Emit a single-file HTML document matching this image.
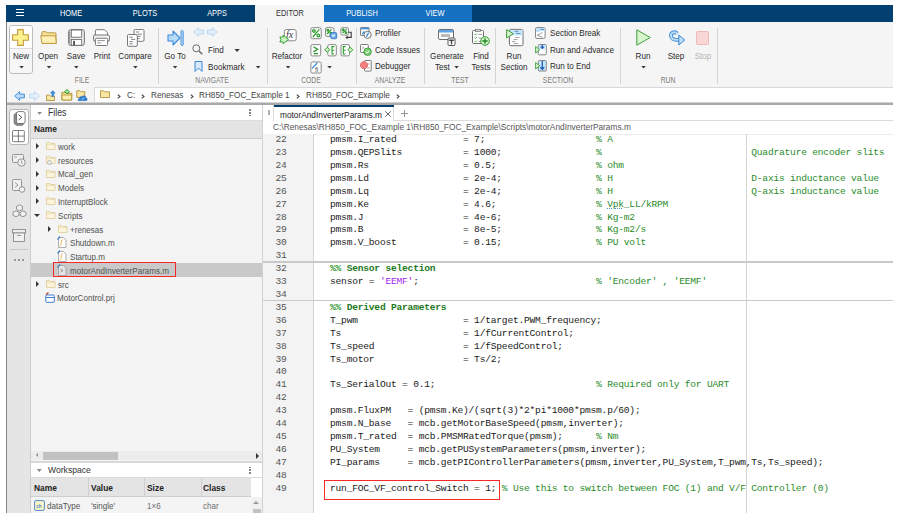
<!DOCTYPE html>
<html><head><meta charset="utf-8">
<style>
*{margin:0;padding:0;box-sizing:border-box}
html,body{width:899px;height:513px;overflow:hidden;background:#fff;position:relative;font-family:"Liberation Sans",sans-serif}
.a{position:absolute}
.t{position:absolute;white-space:pre;line-height:1;font-family:"Liberation Sans",sans-serif}
.t{transform:scaleX(.875);transform-origin:0 0}
.t.c{transform:translateX(-50%) scaleX(.875);transform-origin:50% 0}
.m{font-family:"Liberation Mono",monospace}
svg{position:absolute;overflow:visible}
/* tab bar */
#tabbar{left:6px;top:5px;width:887px;height:16.5px;background:#03406f}
.tab{color:#fff;font-size:8.46px;top:9.3px}
/* toolbar */
#toolbar{left:6px;top:21.5px;width:887px;height:66px;background:#f5f5f5}
.lbl{font-size:9.26px;color:#2a2a2a}
.grp{font-size:8.3px;color:#7a7a7a;top:75.7px}
.t.grp{transform:translateX(-50%) scaleX(.82)}
.sep{width:1px;background:#d4d4d4;top:27.5px;height:56.5px}
.arr{width:5.4px;height:3px;background:#383838;clip-path:polygon(0 0,100% 0,50% 100%)}
/* address */
#addr{left:6px;top:87.5px;width:887px;height:16px;background:#f5f5f5}
.code{font-family:"Liberation Mono",monospace;font-size:9.6px;letter-spacing:-0.214px;color:#1a1a1a;white-space:pre;position:absolute;line-height:12.91px}
.cm{color:#2a8c2a}
.cm2{color:#2a952a;font-weight:bold}
.cmb{color:#1d7a1d;font-weight:bold}
.str{color:#a51ff0}
.ln{position:absolute;font-family:"Liberation Mono",monospace;font-size:9.6px;letter-spacing:-0.214px;color:#555;line-height:12.91px;text-align:right;width:22px;white-space:pre}
.tree{font-size:9.49px;color:#505050}
.t.tree{transform:scaleX(.85)}
</style></head><body>
<!-- frame left border -->
<div class="a" style="left:6px;top:21.5px;width:1px;height:492px;background:#828282;z-index:5"></div>

<!-- TAB BAR -->
<div id="tabbar" class="a"></div>
<div class="a" style="left:255.3px;top:5px;width:68.6px;height:16.5px;background:#f5f5f5"></div>
<div class="a" style="left:324px;top:5px;width:148px;height:16.5px;background:#1470c0"></div>
<div class="a" style="left:16px;top:9px;width:8px;height:1.2px;background:#fff"></div>
<div class="a" style="left:16px;top:12px;width:8px;height:1.2px;background:#fff"></div>
<div class="a" style="left:16px;top:15px;width:8px;height:1.2px;background:#fff"></div>
<div class="t tab c" style="left:71px">HOME</div>
<div class="t tab c" style="left:145px">PLOTS</div>
<div class="t tab c" style="left:217px">APPS</div>
<div class="t tab c" style="left:290px;color:#333">EDITOR</div>
<div class="t tab c" style="left:362px">PUBLISH</div>
<div class="t tab c" style="left:435px">VIEW</div>

<!-- TOOLBAR -->
<div id="toolbar" class="a"></div>

<!-- FILE group -->
<div class="a" style="left:8.8px;top:24.5px;width:24.5px;height:49px;border:1px solid #bdbdbd;border-radius:3px;background:#f7f7f7"></div>
<div class="a" style="left:9.8px;top:25.5px;width:22.5px;height:23px;background:#fff;border-bottom:1px solid #dcdcdc;border-radius:2px 2px 0 0"></div>
<svg style="left:12.3px;top:28.9px" width="17" height="17" viewBox="0 0 17 17"><path d="M5.7 0.6h5.6v5.1h5.1v5.6h-5.1v5.1H5.7v-5.1H0.6V5.7h5.1z" fill="#fdf08e" stroke="#c49a3c" stroke-width="1.1" stroke-linejoin="round"/></svg>
<svg style="left:40px;top:31px" width="17" height="13" viewBox="0 0 17 13"><path d="M1.8 1.6q0-0.9 0.9-0.9h3.4l1 1.1h8q0.9 0 0.9 0.9v9.6H2.2z" fill="#f5e296" stroke="#b8913a" stroke-width="0.9" stroke-linejoin="round"/><path d="M0.7 4.8h14.8l0.9 7.6H2z" fill="#fdf0b4" stroke="#b8913a" stroke-width="0.9" stroke-linejoin="round"/></svg>
<svg style="left:67.5px;top:28.9px" width="17" height="17" viewBox="0 0 17 17"><rect x="0.7" y="0.7" width="15.6" height="15.6" rx="2" fill="#f4f4f4" stroke="#6a6a6a" stroke-width="1"/><path d="M1.6 2.5v12" stroke="#9a9a9a" stroke-width="1.4"/><rect x="3.3" y="1" width="10.4" height="7.2" fill="#fff" stroke="#6a6a6a" stroke-width="0.9"/><rect x="3.3" y="10.4" width="10.4" height="5.9" fill="#fff" stroke="#6a6a6a" stroke-width="0.9"/><rect x="5.2" y="11.8" width="1.7" height="4.3" fill="#444"/></svg>
<svg style="left:93px;top:28.9px" width="17" height="17" viewBox="0 0 17 17"><path d="M2.4 6V1.5q0-0.8 0.8-0.8h8.3l2.9 2.9V6" fill="#fff" stroke="#6a6a6a" stroke-width="0.9"/><rect x="0.5" y="6" width="16" height="6.3" rx="1.6" fill="#f0f0f0" stroke="#6a6a6a" stroke-width="0.9"/><rect x="2.4" y="9.3" width="12.2" height="7.2" rx="1" fill="#fff" stroke="#6a6a6a" stroke-width="0.9"/><path d="M4.3 11.6h7.5M4.3 13.9h3.5" stroke="#777" stroke-width="0.8"/></svg>
<svg style="left:126.5px;top:28.5px" width="18" height="18" viewBox="0 0 18 18"><rect x="7" y="0.5" width="10" height="11.8" rx="1.2" fill="#fff" stroke="#6a6a6a" stroke-width="0.9"/><path d="M8.8 3h3.5M10.5 5.2h4.5M8.8 7.4h5M8.8 9.6h4" stroke="#666" stroke-width="0.8"/><rect x="0.5" y="5.5" width="9.8" height="11.8" rx="1.2" fill="#fff" stroke="#6a6a6a" stroke-width="0.9"/><path d="M2.3 8.2h3.5M4 10.4h4.3M2.3 12.6h3.5M2.3 14.8h3.5" stroke="#666" stroke-width="0.8"/></svg>
<div class="t lbl c" style="left:21px;top:51.5px">New</div>
<div class="t lbl c" style="left:48.4px;top:51.5px">Open</div>
<div class="t lbl c" style="left:75.7px;top:51.5px">Save</div>
<div class="t lbl c" style="left:101.6px;top:51.5px">Print</div>
<div class="t lbl c" style="left:134.8px;top:51.5px">Compare</div>
<div class="a arr" style="left:18.9px;top:65.5px"></div>
<div class="a arr" style="left:46.3px;top:65.5px"></div>
<div class="a arr" style="left:73.6px;top:65.5px"></div>
<div class="a arr" style="left:132.7px;top:65.5px"></div>
<div class="t grp c" style="left:82px">FILE</div>
<div class="a sep" style="left:158px"></div>

<!-- NAVIGATE -->
<svg style="left:166.5px;top:30px" width="17" height="16" viewBox="0 0 17 16"><path d="M1 5h5V1l7 7-7 7v-4H1z" fill="#b8dcf8" stroke="#3b8ad8" stroke-width="1.1" stroke-linejoin="round"/><rect x="14" y="0.5" width="2.2" height="15" rx="1" fill="#b8dcf8" stroke="#3b8ad8" stroke-width="0.9"/></svg>
<div class="t lbl c" style="left:174.5px;top:51.5px">Go To</div>
<div class="a arr" style="left:172.4px;top:65.5px"></div>
<svg style="left:192.9px;top:27.4px" width="25" height="10" viewBox="0 0 25 10"><path d="M0.6 5L5.2 0.6V3h5.2v4H5.2v2.4z" fill="#e2effb" stroke="#b3d4f0" stroke-width="0.9" stroke-linejoin="round"/><path d="M24 5L19.4 0.6V3h-5.2v4h5.2v2.4z" fill="#e2effb" stroke="#b3d4f0" stroke-width="0.9" stroke-linejoin="round"/></svg>
<svg style="left:192px;top:44px" width="11" height="11" viewBox="0 0 11 11"><circle cx="4.3" cy="4.3" r="3.5" fill="none" stroke="#6a6a6a" stroke-width="1"/><path d="M7 7l3.3 3.3" stroke="#6a6a6a" stroke-width="1.4"/></svg>
<div class="t lbl" style="left:208.2px;top:46.0px">Find</div>
<div class="a arr" style="left:234.4px;top:49px"></div>
<svg style="left:193.5px;top:61px" width="9" height="11" viewBox="0 0 9 11"><path d="M1 0.5h7v10L4.5 7 1 10.5z" fill="#d7e9fa" stroke="#3b8ad8" stroke-width="1"/></svg>
<div class="t lbl" style="left:208.2px;top:62.5px">Bookmark</div>
<div class="a arr" style="left:255.4px;top:65.5px"></div>
<div class="t grp c" style="left:212.3px">NAVIGATE</div>
<div class="a sep" style="left:266.5px"></div>

<!-- CODE -->
<svg style="left:278.5px;top:28.8px" width="18" height="16" viewBox="0 0 18 16"><rect x="5.4" y="0.5" width="11.8" height="11.3" rx="2" fill="#fff" stroke="#7a7a7a" stroke-width="0.9"/><text x="7" y="9.3" font-family="Liberation Serif" font-style="italic" font-size="10" fill="#3a3a3a">fx</text><path d="M0.8 8H4.2V6.3L9.5 10.5 4.2 14.7V13H0.8L2 10.5z" fill="#c8f5c0" stroke="#2f9a2f" stroke-width="0.9" stroke-linejoin="round"/></svg>
<div class="t lbl c" style="left:287px;top:51.5px">Refactor</div>
<div class="a arr" style="left:285.4px;top:65.5px"></div>
<svg style="left:309.5px;top:26.5px" width="44" height="47" viewBox="0 0 44 47">
<g fill="#fff" stroke="#7a7a7a" stroke-width="0.9">
<rect x="0.9" y="0.7" width="10.3" height="11" rx="1.5"/>
<rect x="15.5" y="0.7" width="8.5" height="8.7" rx="1.5"/>
<rect x="30.9" y="0.7" width="7.6" height="7.3" rx="1.5"/>
<rect x="0.9" y="17.6" width="9.8" height="11.3" rx="1.5"/>
<rect x="17.8" y="17.6" width="8.5" height="11.3" rx="1.5"/>
<rect x="31" y="17.6" width="8.5" height="11.3" rx="1.5"/>
<rect x="0.9" y="35" width="10.3" height="11" rx="1.5"/>
</g>
<g fill="none" stroke="#2a9a2a" stroke-width="1.2">
<circle cx="3.9" cy="3.9" r="1.3"/><circle cx="8.3" cy="8.5" r="1.3"/><path d="M2.8 10L9.3 2.4"/>
<circle cx="17.8" cy="3.2" r="0.9"/><circle cx="20.8" cy="6.2" r="0.9"/><path d="M17 7l4.6-4.6"/>
<circle cx="33.2" cy="3" r="0.8"/><circle cx="36" cy="5.7" r="0.8"/><path d="M32.6 6.2l4-4"/>
<path d="M3.5 19.7L7.6 22.3 3.5 24.9M3.8 26.6h4.2" stroke-width="1.3"/>
<path d="M24.3 19.6H22V27h2.3M22 23.3h2.3" stroke-width="1.1"/>
<path d="M35.6 19.6H33.3V27h2.3M33.3 23.3h2.3" stroke-width="1.1"/>
</g>
<path d="M19.6 8.6L21.6 5.6H25.6Q26.6 5.6 26.6 6.6V10.7Q26.6 11.7 25.6 11.7H21.6z" fill="#6aa8e6" stroke="#2f6fc0" stroke-width="0.8"/><rect x="22" y="7.6" width="3" height="2" fill="#d8ebfb"/>
<path d="M38.8 5.2h2.4v5.2h-4.2" fill="none" stroke="#3a3a3a" stroke-width="1.1"/><path d="M37.6 8.6l-2.2 1.8 2.2 1.8z" fill="#3a3a3a"/>
<path d="M17.3 20.2l2.5 2.6-2.5 2.6-2.5-2.6z" fill="#c8f0c0" stroke="#2a9a2a" stroke-width="0.9"/>
<path d="M40.3 20.2l2.5 2.6-2.5 2.6-2.5-2.6z" fill="#c8f0c0" stroke="#2a9a2a" stroke-width="0.9"/>
<path d="M2 41.5L7.2 36" stroke="#3b8ad8" stroke-width="1.1"/><text x="5" y="44.8" font-size="6.5" fill="#555" font-family="Liberation Sans">fi</text>
</svg>
<div class="a arr" style="left:326.9px;top:65.5px"></div>
<div class="t grp c" style="left:311px">CODE</div>
<div class="a sep" style="left:355.5px"></div>

<!-- ANALYZE -->
<svg style="left:360px;top:27.2px" width="12" height="12" viewBox="0 0 12 12"><rect x="0.5" y="0.5" width="8.6" height="8" rx="0.8" fill="#fff" stroke="#6e6e6e" stroke-width="0.9"/><rect x="0.6" y="0.6" width="8.4" height="1.8" fill="#4a90d9"/><circle cx="7.6" cy="7.8" r="3.6" fill="#f4f4f4" stroke="#6e6e6e" stroke-width="0.9"/><path d="M2 7.5l1.8-3.2 0.9 1z" fill="#3b8ad8" stroke="#1f6fc0" stroke-width="0.5"/><path d="M6.4 9.6L8.6 5.6" stroke="#3b8ad8" stroke-width="1.2"/></svg>
<div class="t lbl" style="left:375.2px;top:29.0px">Profiler</div>
<svg style="left:360px;top:43.8px" width="12" height="12" viewBox="0 0 12 12"><rect x="0.5" y="0.5" width="7.8" height="8" rx="0.8" fill="#fff" stroke="#6e6e6e" stroke-width="0.9"/><path d="M2.2 2.5l1.6 1.3-1.6 1.3" fill="none" stroke="#777" stroke-width="0.7"/><circle cx="7.6" cy="7.7" r="3.7" fill="#7fd27a" stroke="#2f9a2f" stroke-width="0.9"/><path d="M5.7 7.8l1.3 1.3 2.3-2.5" fill="none" stroke="#fff" stroke-width="1"/></svg>
<div class="t lbl" style="left:375.2px;top:45.5px">Code Issues</div>
<svg style="left:360px;top:60.2px" width="12" height="12" viewBox="0 0 12 12"><rect x="4.6" y="0.5" width="6.6" height="10.6" rx="0.6" fill="#fff" stroke="#6e6e6e" stroke-width="0.9"/><path d="M7.2 4h2.3M7.2 8h2.3" stroke="#c94b4b" stroke-width="0.7"/><path d="M2.6 1.8h2.8l2 2v2.8l-2 2H2.6l-2-2V3.8z" fill="#f58080" stroke="#cf5a5a" stroke-width="0.8"/></svg>
<div class="t lbl" style="left:375.2px;top:62.0px">Debugger</div>
<div class="t grp c" style="left:389.6px">ANALYZE</div>
<div class="a sep" style="left:423.5px"></div>

<!-- TEST -->
<svg style="left:438px;top:28.5px" width="18" height="17" viewBox="0 0 18 17"><rect x="0.5" y="0.5" width="15" height="10" rx="1.5" fill="#fff" stroke="#6e6e6e" stroke-width="1"/><rect x="1" y="1" width="14" height="2.5" fill="#5fa3e6"/><rect x="3" y="5" width="9" height="3" fill="#bbb"/><rect x="10" y="9" width="7" height="7.5" rx="1" fill="#fff" stroke="#555" stroke-width="1"/><path d="M11.2 11.2h4.6M13.5 11.2v4.3" stroke="#444" stroke-width="1.4"/></svg>
<div class="t lbl c" style="left:446.6px;top:51.5px">Generate</div>
<div class="t lbl" style="left:434.5px;top:63.0px">Test</div>
<div class="a arr" style="left:453.9px;top:65.5px"></div>
<svg style="left:471.5px;top:28.5px" width="18" height="17" viewBox="0 0 18 17"><rect x="0.5" y="1.5" width="11" height="13" rx="1" fill="#fff" stroke="#6e6e6e" stroke-width="1"/><rect x="3.5" y="0.5" width="5" height="2" fill="#ddd" stroke="#6e6e6e" stroke-width="0.7"/><path d="M2.5 5l1 1 1.5-1.5M2.5 8.5l1 1 1.5-1.5M2.5 12l1 1 1.5-1.5" fill="none" stroke="#2f9a2f" stroke-width="0.8"/><path d="M6.5 5.5h3.5M6.5 9h3M6.5 12.5h2" stroke="#888" stroke-width="0.8"/><circle cx="13" cy="12" r="4.3" fill="#d8f5d0" stroke="#2f9a2f" stroke-width="1"/><path d="M13 9.3v5.4M10.3 12h5.4" stroke="#1f8a1f" stroke-width="1.4"/></svg>
<div class="t lbl c" style="left:480.7px;top:51.5px">Find</div>
<div class="t lbl c" style="left:480.7px;top:63.0px">Tests</div>
<div class="t grp c" style="left:459.6px">TEST</div>
<div class="a sep" style="left:495.3px"></div>

<!-- SECTION -->
<svg style="left:506px;top:29px" width="18" height="17" viewBox="0 0 18 17"><rect x="3.4" y="0.4" width="13.6" height="16.3" rx="1.5" fill="#fff" stroke="#6e6e6e" stroke-width="1"/><rect x="3.9" y="0.9" width="12.6" height="5.6" fill="#c8e6fb"/><path d="M8.5 2.3h4M10 4.5h4.5" stroke="#4a7fb0" stroke-width="0.8"/><path d="M9 8.5h4.5M7.5 10.5h4M6 12.5h3.5M7.5 14.5h5" stroke="#808080" stroke-width="0.7"/><path d="M0.6 0.6v8.4l6.8-4.2z" fill="#d6f5cc" stroke="#3f9f3f" stroke-width="1" stroke-linejoin="round"/></svg>
<div class="t lbl c" style="left:514.4px;top:51.5px">Run</div>
<div class="t lbl c" style="left:514.4px;top:63.0px">Section</div>
<svg style="left:535px;top:27.2px" width="11" height="12" viewBox="0 0 11 12"><rect x="0.5" y="0.5" width="9.6" height="11" rx="1.6" fill="#fff" stroke="#7a7a7a" stroke-width="0.9"/><path d="M1 1h8.6v3H5.2L4.2 5H1z" fill="#bfe0fb"/><path d="M5.5 2.5h3.5" stroke="#3b7fc0" stroke-width="0.8"/><path d="M2 8.3l5.5-2.6M2 8.3l5.5 1.8" stroke="#888" stroke-width="0.8"/></svg>
<div class="t lbl" style="left:550.3px;top:29.0px">Section Break</div>
<svg style="left:534.5px;top:43.6px" width="12" height="12" viewBox="0 0 12 12"><rect x="3.3" y="0.5" width="8" height="10.3" rx="1" fill="#fff" stroke="#7a7a7a" stroke-width="0.9"/><rect x="3.8" y="1" width="7" height="4.2" fill="#c8e6fb"/><path d="M7.3 0.8v3.2M5.6 2.6l1.7 1.8 1.7-1.8" stroke="#1f5fb0" stroke-width="1.2" fill="none"/><path d="M0.6 2.5v6.5l4.2-3.25z" fill="#d6f5cc" stroke="#3f9f3f" stroke-width="0.9" stroke-linejoin="round"/></svg>
<div class="t lbl" style="left:550.3px;top:45.5px">Run and Advance</div>
<svg style="left:534.5px;top:59.9px" width="12" height="12" viewBox="0 0 12 12"><rect x="3.3" y="0.5" width="8" height="10.5" rx="1" fill="#c8e6fb" stroke="#7a7a7a" stroke-width="0.9"/><path d="M7.3 1v8M5.4 7.2l1.9 2.1 1.9-2.1" stroke="#1f5fb0" stroke-width="1.3" fill="none"/><path d="M0.6 2.5v6.5l4.2-3.25z" fill="#d6f5cc" stroke="#3f9f3f" stroke-width="0.9" stroke-linejoin="round"/></svg>
<div class="t lbl" style="left:550.3px;top:62.0px">Run to End</div>
<div class="t grp c" style="left:557.5px">SECTION</div>
<div class="a sep" style="left:619.6px"></div>

<!-- RUN -->
<svg style="left:635.8px;top:28.9px" width="15" height="17" viewBox="0 0 15 17"><path d="M0.8 0.8v15.4l13.4-7.7z" fill="#d6f5cc" stroke="#3f9f3f" stroke-width="1" stroke-linejoin="round"/></svg>
<div class="t lbl c" style="left:643px;top:51.5px">Run</div>
<div class="a arr" style="left:640.9px;top:65.5px"></div>
<svg style="left:667.5px;top:29.8px" width="18" height="16" viewBox="0 0 18 16"><path d="M9.2 3.6C7.2 1.3 3 2 3 5.5 3 8.3 5.5 9.8 8.5 9.8H11.5" fill="none" stroke="#3d8ad6" stroke-width="3.8"/><path d="M9.2 3.6C7.2 1.3 3 2 3 5.5 3 8.3 5.5 9.8 8.5 9.8H11.5" fill="none" stroke="#bcdcf7" stroke-width="1.9"/><path d="M10.8 5L16.8 10 10.8 15z" fill="#bcdcf7" stroke="#3d8ad6" stroke-width="1" stroke-linejoin="round"/></svg>
<div class="t lbl c" style="left:676.4px;top:51.5px">Step</div>
<div class="a" style="left:696.2px;top:31px;width:13.2px;height:13.6px;background:#f9d7d7;border:0.8px solid #efb9b9;border-radius:1.5px"></div>
<div class="t lbl c" style="left:703px;top:51.5px;color:#b4b4b4">Stop</div>
<div class="t grp c" style="left:668.2px">RUN</div>
<div class="a sep" style="left:716.6px"></div>


<!-- ADDRESS BAR -->
<div id="addr" class="a"></div>
<svg style="left:13.5px;top:90.8px" width="11" height="10" viewBox="0 0 11 10"><path d="M0.6 5L5.6 0.6V3.1H10.4V6.9H5.6V9.4z" fill="#b5d9f7" stroke="#3d8ad6" stroke-width="0.9" stroke-linejoin="round"/></svg>
<svg style="left:28.8px;top:90.8px" width="11" height="10" viewBox="0 0 11 10"><path d="M10.4 5L5.4 0.6V3.1H0.6V6.9H5.4V9.4z" fill="#e4f0fb" stroke="#b8d6f0" stroke-width="0.9" stroke-linejoin="round"/></svg>
<svg style="left:46px;top:90px" width="10" height="11" viewBox="0 0 10 11"><path d="M0.5 5.2h3l1 1h4v4.3H0.5z" fill="#f6e7a6" stroke="#b39234" stroke-width="0.9" stroke-linejoin="round"/><path d="M6.8 0.5L4.3 3.2h1.6v3.3h1.8V3.2h1.6z" fill="#3b8ad8" stroke="#1f6fc0" stroke-width="0.4"/></svg>
<svg style="left:61px;top:89.3px" width="12" height="12" viewBox="0 0 12 12"><path d="M0.8 3.3h3.2l1 1h5.8v6.7H0.8z" fill="#f1dc8f" stroke="#b39234" stroke-width="0.9" stroke-linejoin="round"/><path d="M0.8 6h10l-0.5 5H1.3z" fill="#fbeeb0" stroke="#b39234" stroke-width="0.8" stroke-linejoin="round"/><path d="M6 0.5l2.4 2.2L6 4.9 3.6 2.7z" fill="#9fe39a" stroke="#2f9a2f" stroke-width="0.9"/></svg>
<svg style="left:75.5px;top:89.5px" width="12" height="12" viewBox="0 0 12 12"><path d="M0.8 0.8h3.3l1 1h3.7v5.6H0.8z" fill="#f6e7a6" stroke="#b39234" stroke-width="0.9" stroke-linejoin="round"/><path d="M2.3 10.6h7.8c1.3 0 1.6-2.5-0.2-2.7 0-2-2.7-2.9-3.9-1.1-1.4-0.5-2.6 0.3-2.5 1.5C2.3 8.6 1.5 10.6 2.3 10.6z" fill="#2f7fd4" stroke="#1f66b8" stroke-width="0.6"/><path d="M6.3 9.6l1.4-1.8" stroke="#fff" stroke-width="0.9"/></svg>
<div class="a" style="left:94.4px;top:87px;width:798.6px;height:15.5px;background:#fff;border:1px solid #d8d8d8;border-right:none"></div>
<svg style="left:100px;top:89.6px" width="10" height="8" viewBox="0 0 10 8"><path d="M0.5 0.8h3.2l1 1h4.8v5.7H0.5z" fill="#f6e7a6" stroke="#b39234" stroke-width="0.9"/></svg>
<svg style="left:116.9px;top:94px" width="4" height="5" viewBox="0 0 4 5"><path d="M0.8 0.6L3 2.5 0.8 4.4" fill="none" stroke="#444" stroke-width="1.1"/></svg>
<div class="t" style="left:126.7px;top:91px;font-size:9.37px;color:#444">C:</div>
<svg style="left:141.1px;top:94px" width="4" height="5" viewBox="0 0 4 5"><path d="M0.8 0.6L3 2.5 0.8 4.4" fill="none" stroke="#444" stroke-width="1.1"/></svg>
<div class="t" style="left:150.7px;top:91px;font-size:9.37px;color:#444">Renesas</div>
<svg style="left:189.9px;top:94px" width="4" height="5" viewBox="0 0 4 5"><path d="M0.8 0.6L3 2.5 0.8 4.4" fill="none" stroke="#444" stroke-width="1.1"/></svg>
<div class="t" style="left:199.2px;top:91px;font-size:9.37px;color:#444">RH850_FOC_Example 1</div>
<svg style="left:296.1px;top:94px" width="4" height="5" viewBox="0 0 4 5"><path d="M0.8 0.6L3 2.5 0.8 4.4" fill="none" stroke="#444" stroke-width="1.1"/></svg>
<div class="t" style="left:306px;top:91px;font-size:9.37px;color:#444">RH850_FOC_Example</div>
<svg style="left:396.4px;top:94px" width="4" height="5" viewBox="0 0 4 5"><path d="M0.8 0.6L3 2.5 0.8 4.4" fill="none" stroke="#444" stroke-width="1.1"/></svg>
<div class="a" style="left:6px;top:102px;width:887px;height:1.4px;background:#d2d2d2"></div><div class="a" style="left:6px;top:103.4px;width:887px;height:1.4px;background:#a9a9a9"></div>

<!-- LEFT SIDEBAR -->
<div class="a" style="left:6px;top:104.5px;width:24.5px;height:409px;background:#e5e5e5;border-right:1px solid #cdcdcd"></div>
<div class="a" style="left:8.7px;top:109.1px;width:20.4px;height:36.3px;background:#fff;border:1px solid #b5b5b5;border-radius:3px"></div>
<svg style="left:12.5px;top:111.3px" width="13" height="15" viewBox="0 0 13 15"><path d="M3.5 1.2L1 3.7V12.5L3.5 14.4H9.5L11 12.5H3.5z" fill="#8c8c8c" stroke="#6a6a6a" stroke-width="0.6" stroke-linejoin="round"/><rect x="3.5" y="0.6" width="8.6" height="11.9" rx="2" fill="#fff" stroke="#6a6a6a" stroke-width="0.9"/><path d="M5.6 3.8l3.2 2.6-3.2 2.6" fill="none" stroke="#555" stroke-width="1"/></svg>
<svg style="left:12.3px;top:129.6px" width="13" height="12" viewBox="0 0 13 12"><rect x="0.5" y="0.5" width="11.8" height="11.2" rx="0.8" fill="#fff" stroke="#6e6e6e" stroke-width="0.9"/><path d="M6.4 0.5v11.2M0.5 6.1h11.8" stroke="#6e6e6e" stroke-width="0.9"/></svg>
<svg style="left:12px;top:153.5px" width="14" height="13" viewBox="0 0 14 13"><rect x="0.5" y="0.5" width="11" height="8" rx="1" fill="#f0f0f0" stroke="#8a8a8a" stroke-width="0.9"/><path d="M2 3h3" stroke="#8a8a8a" stroke-width="0.8"/><circle cx="9.5" cy="8.5" r="3.7" fill="#f0f0f0" stroke="#8a8a8a" stroke-width="0.9"/><path d="M9.5 6.5v2.2l1.5 1" fill="none" stroke="#8a8a8a" stroke-width="0.8"/></svg>
<svg style="left:12px;top:178.5px" width="14" height="14" viewBox="0 0 14 14"><rect x="0.5" y="0.5" width="9" height="11" rx="1" fill="#f0f0f0" stroke="#8a8a8a" stroke-width="0.9"/><path d="M3 3.5l3 2.5-3 2.5" fill="none" stroke="#8a8a8a" stroke-width="0.9"/><circle cx="10" cy="10.5" r="2.8" fill="#f0f0f0" stroke="#8a8a8a" stroke-width="0.9"/></svg>
<svg style="left:11.5px;top:204px" width="15" height="14" viewBox="0 0 15 14"><g fill="#f0f0f0" stroke="#8a8a8a" stroke-width="0.9"><path d="M7.5 0.8l3 1.5v3l-3 1.5-3-1.5v-3z"/><path d="M4 6.8l3 1.5v3l-3 1.5-3-1.5v-3z"/><path d="M11 6.8l3 1.5v3l-3 1.5-3-1.5v-3z"/></g></svg>
<svg style="left:12px;top:228.5px" width="14" height="13" viewBox="0 0 14 13"><rect x="0.5" y="0.5" width="13" height="3.5" fill="#f0f0f0" stroke="#8a8a8a" stroke-width="0.9"/><rect x="1.5" y="4" width="11" height="8.5" fill="#f0f0f0" stroke="#8a8a8a" stroke-width="0.9"/><path d="M5 6.5h4" stroke="#8a8a8a" stroke-width="0.9"/></svg>
<div class="a" style="left:10px;top:249px;width:17.6px;height:1px;background:#c8c8c8"></div>
<div class="a" style="left:13.5px;top:259px;width:2px;height:2px;background:#7a7a7a;border-radius:50%"></div><div class="a" style="left:17.7px;top:259px;width:2px;height:2px;background:#7a7a7a;border-radius:50%"></div><div class="a" style="left:21.9px;top:259px;width:2px;height:2px;background:#7a7a7a;border-radius:50%"></div>

<!-- FILES PANEL -->
<div class="a" style="left:31px;top:104.5px;width:231px;height:409px;background:#f4f4f4"></div>
<div class="a" style="left:262px;top:104.5px;width:1.3px;height:409px;background:#d2d2d2"></div>
<div class="a" style="left:31px;top:104.5px;width:231px;height:16px;background:#fff;border-bottom:1px solid #dcdcdc"></div>
<div class="a arr" style="left:37px;top:111.7px;background:#8a8a8a;width:5.2px;height:3px"></div>
<div class="t" style="left:47.5px;top:108.4px;font-size:10px;color:#333">Files</div>
<div class="a" style="left:249.1px;top:109.2px;width:1.5px;height:1.5px;background:#6a6a6a;border-radius:50%"></div><div class="a" style="left:249.1px;top:112.0px;width:1.5px;height:1.5px;background:#6a6a6a;border-radius:50%"></div><div class="a" style="left:249.1px;top:114.8px;width:1.5px;height:1.5px;background:#6a6a6a;border-radius:50%"></div>
<div class="a" style="left:31px;top:120.5px;width:231px;height:18px;background:#e4e4e4;border-bottom:1.5px solid #cdcdcd"></div>
<div class="t" style="left:33.5px;top:124px;font-size:9.60px;color:#222;font-weight:bold">Name</div>
<div class="a" style="left:31px;top:263px;width:231px;height:13.5px;background:#c9c9c9"></div>
<div class="a" style="left:35.800000000000004px;top:143.4px;width:0;height:0;border-top:3px solid transparent;border-bottom:3px solid transparent;border-left:3px solid #333"></div>
<svg style="left:45.5px;top:142.0px" width="10" height="8" viewBox="0 0 10 8"><path d="M0.5 0.5h3.2l1 1h4.3v6H0.5z" fill="#fcf5dc" stroke="#dccb96" stroke-width="0.8"/><path d="M0.5 2.3h8.5" stroke="#dccb96" stroke-width="0.6"/></svg>
<div class="t tree" style="left:57.5px;top:141.8px">work</div>
<div class="a" style="left:35.800000000000004px;top:157.2px;width:0;height:0;border-top:3px solid transparent;border-bottom:3px solid transparent;border-left:3px solid #333"></div>
<svg style="left:45.5px;top:155.8px" width="10" height="8" viewBox="0 0 10 8"><path d="M0.5 0.5h3.2l1 1h4.3v6H0.5z" fill="#fcf5dc" stroke="#dccb96" stroke-width="0.8"/><path d="M0.5 2.3h8.5" stroke="#dccb96" stroke-width="0.6"/><circle cx="3.5" cy="6.5" r="2" fill="#eee" stroke="#999" stroke-width="0.6"/></svg>
<div class="t tree" style="left:57.5px;top:155.6px">resources</div>
<div class="a" style="left:35.800000000000004px;top:171.0px;width:0;height:0;border-top:3px solid transparent;border-bottom:3px solid transparent;border-left:3px solid #333"></div>
<svg style="left:45.5px;top:169.6px" width="10" height="8" viewBox="0 0 10 8"><path d="M0.5 0.5h3.2l1 1h4.3v6H0.5z" fill="#fcf5dc" stroke="#dccb96" stroke-width="0.8"/><path d="M0.5 2.3h8.5" stroke="#dccb96" stroke-width="0.6"/></svg>
<div class="t tree" style="left:57.5px;top:169.4px">Mcal_gen</div>
<div class="a" style="left:35.800000000000004px;top:184.7px;width:0;height:0;border-top:3px solid transparent;border-bottom:3px solid transparent;border-left:3px solid #333"></div>
<svg style="left:45.5px;top:183.3px" width="10" height="8" viewBox="0 0 10 8"><path d="M0.5 0.5h3.2l1 1h4.3v6H0.5z" fill="#fcf5dc" stroke="#dccb96" stroke-width="0.8"/><path d="M0.5 2.3h8.5" stroke="#dccb96" stroke-width="0.6"/></svg>
<div class="t tree" style="left:57.5px;top:183.1px">Models</div>
<div class="a" style="left:35.800000000000004px;top:198.4px;width:0;height:0;border-top:3px solid transparent;border-bottom:3px solid transparent;border-left:3px solid #333"></div>
<svg style="left:45.5px;top:197.0px" width="10" height="8" viewBox="0 0 10 8"><path d="M0.5 0.5h3.2l1 1h4.3v6H0.5z" fill="#fcf5dc" stroke="#dccb96" stroke-width="0.8"/><path d="M0.5 2.3h8.5" stroke="#dccb96" stroke-width="0.6"/></svg>
<div class="t tree" style="left:57.5px;top:196.8px">InterruptBlock</div>
<div class="a" style="left:34.1px;top:213.89999999999998px;width:0;height:0;border-left:3px solid transparent;border-right:3px solid transparent;border-top:3px solid #333"></div>
<svg style="left:45.5px;top:210.8px" width="10" height="8" viewBox="0 0 10 8"><path d="M0.5 0.5h3.2l1 1h4.3v6H0.5z" fill="#fcf5dc" stroke="#dccb96" stroke-width="0.8"/><path d="M0.5 2.3h8.5" stroke="#dccb96" stroke-width="0.6"/></svg>
<div class="t tree" style="left:57.5px;top:210.6px">Scripts</div>
<div class="a" style="left:48.1px;top:226.1px;width:0;height:0;border-top:3px solid transparent;border-bottom:3px solid transparent;border-left:3px solid #333"></div>
<svg style="left:58.2px;top:224.7px" width="10" height="8" viewBox="0 0 10 8"><path d="M0.5 0.5h3.2l1 1h4.3v6H0.5z" fill="#fcf5dc" stroke="#dccb96" stroke-width="0.8"/><path d="M0.5 2.3h8.5" stroke="#dccb96" stroke-width="0.6"/></svg>
<div class="t tree" style="left:70.3px;top:224.5px">+renesas</div>
<svg style="left:56.5px;top:236.4px" width="10" height="12" viewBox="0 0 10 12"><path d="M1.5 1.5h5l2.5 2.5v7.5H1.5z" fill="#fff" stroke="#9a9a9a" stroke-width="0.8"/><path d="M0.5 3.5L3 0.5" stroke="#4a7fc0" stroke-width="1.2"/><path d="M5.5 3.5c-1.5 0-1 3-1.5 5-0.3 1.2-1 1.5-1.5 1.5" fill="none" stroke="#e3b25a" stroke-width="1"/></svg>
<div class="t tree" style="left:70.0px;top:238.4px">Shutdown.m</div>
<svg style="left:56.5px;top:250.2px" width="10" height="12" viewBox="0 0 10 12"><path d="M1.5 1.5h5l2.5 2.5v7.5H1.5z" fill="#fff" stroke="#9a9a9a" stroke-width="0.8"/><path d="M0.5 3.5L3 0.5" stroke="#4a7fc0" stroke-width="1.2"/><path d="M5.5 3.5c-1.5 0-1 3-1.5 5-0.3 1.2-1 1.5-1.5 1.5" fill="none" stroke="#e3b25a" stroke-width="1"/></svg>
<div class="t tree" style="left:70.0px;top:252.20000000000002px">Startup.m</div>
<svg style="left:56.5px;top:263.7px" width="10" height="12" viewBox="0 0 10 12"><path d="M1.5 1.5h5l2.5 2.5v7.5H1.5z" fill="#e6e6e6" stroke="#9a9a9a" stroke-width="0.8"/><path d="M0.5 3.5L3 0.5" stroke="#4a7fc0" stroke-width="1.2"/><path d="M3.5 5l2.5 1.5-2.5 1.5" fill="none" stroke="#777" stroke-width="0.8"/></svg>
<div class="t tree" style="left:70.0px;top:265.7px">motorAndInverterParams.m</div>
<div class="a" style="left:35.800000000000004px;top:281.3px;width:0;height:0;border-top:3px solid transparent;border-bottom:3px solid transparent;border-left:3px solid #333"></div>
<svg style="left:45.5px;top:279.9px" width="10" height="8" viewBox="0 0 10 8"><path d="M0.5 0.5h3.2l1 1h4.3v6H0.5z" fill="#fcf5dc" stroke="#dccb96" stroke-width="0.8"/><path d="M0.5 2.3h8.5" stroke="#dccb96" stroke-width="0.6"/></svg>
<div class="t tree" style="left:57.5px;top:279.7px">src</div>
<svg style="left:45.0px;top:292.3px" width="10" height="11" viewBox="0 0 10 11"><rect x="0.8" y="3" width="8.5" height="7.3" rx="1" fill="#fff" stroke="#3b7fd0" stroke-width="1"/><path d="M0.8 5.5h8.5" stroke="#3b7fd0" stroke-width="1"/><path d="M1 2.5L3.5 0.5" stroke="#c0392b" stroke-width="1.2"/></svg>
<div class="t tree" style="left:57.4px;top:293.2px">MotorControl.prj</div>
<div class="a" style="left:52.9px;top:262.2px;width:122.8px;height:15.1px;border:1.9px solid #f72828"></div>

<!-- files h-scrollbar -->
<div class="a" style="left:31px;top:451px;width:231px;height:9px;background:#ececec"></div>
<div class="a" style="left:43px;top:451.5px;width:74.6px;height:8px;background:#c2c2c2"></div>
<div class="a" style="left:35.5px;top:453.3px;width:0;height:0;border-top:2.5px solid transparent;border-bottom:2.5px solid transparent;border-right:2.5px solid #888"></div>
<div class="a" style="left:255.5px;top:453px;width:0;height:0;border-top:3px solid transparent;border-bottom:3px solid transparent;border-left:3px solid #333"></div>
<div class="a" style="left:31px;top:461px;width:231px;height:1.5px;background:#d8d8d8"></div>
<!-- workspace -->
<div class="a" style="left:31px;top:462.5px;width:231px;height:15.5px;background:#fff;border-bottom:1px solid #dcdcdc"></div>
<div class="a arr" style="left:36.7px;top:469px;background:#8a8a8a;width:5.2px;height:3px"></div>
<div class="t" style="left:48px;top:465.3px;font-size:9.83px;color:#333">Workspace</div>
<div class="a" style="left:249.1px;top:466.5px;width:1.5px;height:1.5px;background:#6a6a6a;border-radius:50%"></div><div class="a" style="left:249.1px;top:469.3px;width:1.5px;height:1.5px;background:#6a6a6a;border-radius:50%"></div><div class="a" style="left:249.1px;top:472.1px;width:1.5px;height:1.5px;background:#6a6a6a;border-radius:50%"></div>
<div class="a" style="left:31px;top:478px;width:219.5px;height:19px;background:#e4e4e4;border-bottom:1.5px solid #cdcdcd"></div>
<div class="a" style="left:87.5px;top:478px;width:1px;height:19px;background:#cfcfcf"></div>
<div class="a" style="left:144px;top:478px;width:1px;height:19px;background:#cfcfcf"></div>
<div class="a" style="left:200.5px;top:478px;width:1px;height:19px;background:#cfcfcf"></div>
<div class="a" style="left:250.5px;top:478px;width:11.5px;height:19px;background:#fff"></div>
<div class="t" style="left:33.7px;top:483px;font-size:9.60px;color:#222;font-weight:bold">Name</div>
<div class="t" style="left:90.6px;top:483px;font-size:9.60px;color:#222;font-weight:bold">Value</div>
<div class="t" style="left:147px;top:483px;font-size:9.60px;color:#222;font-weight:bold">Size</div>
<div class="t" style="left:202.9px;top:483px;font-size:9.60px;color:#222;font-weight:bold">Class</div>
<div class="a" style="left:31px;top:497px;width:231px;height:16px;background:#f4f4f4"></div>
<svg style="left:34px;top:499.5px" width="11" height="11" viewBox="0 0 11 11"><rect x="0.6" y="0.6" width="9.8" height="9.8" rx="1.2" fill="#fdf3c4" stroke="#3b7fd0" stroke-width="0.9"/><text x="2.2" y="7.5" font-size="4.5" font-weight="bold" fill="#3b7fd0" font-family="Liberation Sans">ch</text></svg>
<div class="t tree" style="left:47.2px;top:500.5px;color:#555">dataType</div>
<div class="t tree" style="left:90.6px;top:500.5px;color:#555">'single'</div>
<div class="t tree" style="left:147px;top:500.5px;color:#707070">1×6</div>
<div class="t tree" style="left:203px;top:500.5px;color:#707070">char</div>
<div class="a" style="left:251.5px;top:497px;width:10.5px;height:16px;background:#f0f0f0"></div>
<div class="a" style="left:253.3px;top:501.3px;width:0;height:0;border-left:3.2px solid transparent;border-right:3.2px solid transparent;border-bottom:3px solid #9a9a9a"></div>
<div class="a" style="left:252.5px;top:508.5px;width:8px;height:5px;background:#c2c2c2"></div>

<!-- EDITOR -->
<div class="a" style="left:263.3px;top:104.5px;width:629.7px;height:16px;background:#fff;border-bottom:1px solid #dcdcdc"></div>
<div class="a" style="left:263.3px;top:104.5px;width:10.3px;height:16px;background:#fff;border-right:1px solid #dcdcdc"></div>
<div class="a" style="left:267.5px;top:109.5px;width:2px;height:5px;background:#b0b0b0"></div>
<div class="a" style="left:273.6px;top:105px;width:120.3px;height:15.5px;background:#fff;border-right:1px solid #dcdcdc"></div>
<div class="a" style="left:273.6px;top:105px;width:120.3px;height:2px;background:#03406f"></div>
<div class="t" style="left:280px;top:109.5px;font-size:9.49px;color:#222">motorAndInverterParams.m</div>
<svg style="left:384.5px;top:111.2px" width="6" height="6" viewBox="0 0 6 6"><path d="M0.3 0.3l5.4 5.4M5.7 0.3L0.3 5.7" stroke="#555" stroke-width="0.9"/></svg>
<svg style="left:401.3px;top:109.6px" width="7" height="7" viewBox="0 0 7 7"><path d="M3.5 0v7M0 3.5h7" stroke="#8a8a8a" stroke-width="0.9"/></svg>
<div class="a" style="left:263.3px;top:120.5px;width:629.7px;height:14.5px;background:#fff;border-bottom:1px solid #ececec"></div>
<div class="t" style="left:273px;top:122.5px;font-size:9.37px;color:#555;transform:scaleX(.89)">C:\Renesas\RH850_FOC_Example 1\RH850_FOC_Example\Scripts\motorAndInverterParams.m</div>
<div class="a" style="left:263.3px;top:134px;width:50.5px;height:379px;background:#f3f3f3;border-right:1px solid #d4d4d4"></div>
<div class="a" style="left:746px;top:134px;width:1px;height:379px;background:#d4d4d4"></div>
<div class="a" style="left:263.3px;top:261.3px;width:629.7px;height:1.5px;background:#c9c9c9"></div>
<div class="a" style="left:263.3px;top:299.5px;width:629.7px;height:1.5px;background:#c9c9c9"></div>

<div class="ln" style="left:264.5px;top:134.1px">22
23
24
25
26
27
28
29
30
31
32
33
34
35
36
37
38
39
40
41
42
43
44
45
46
47
48
49</div>
<div class="code" style="left:330px;top:134.1px">pmsm.I_rated            = 7;                    <span class="cm">% A</span>
pmsm.QEPSlits           = 1000;                 <span class="cm">%                           Quadrature encoder slits</span>
pmsm.Rs                 = 0.5;                  <span class="cm">% ohm</span>
pmsm.Ld                 = 2e-4;                 <span class="cm">% H                         D-axis inductance value</span>
pmsm.Lq                 = 2e-4;                 <span class="cm">% H                         Q-axis inductance value</span>
pmsm.Ke                 = 4.6;                  <span class="cm">% <span style="text-decoration:underline dotted #4a90d9">Vpk</span>_LL/kRPM</span>
pmsm.J                  = 4e-6;                 <span class="cm">% Kg-m2</span>
pmsm.B                  = 8e-5;                 <span class="cm">% Kg-m2/s</span>
pmsm.V_boost            = 0.15;                 <span class="cm">% PU volt</span>

<span class="cm2">%% </span><span class="cmb">Sensor selection</span>
sensor = <span class="str">'EEMF'</span>;                                <span class="cm">% 'Encoder' , 'EEMF'</span>

<span class="cm2">%% </span><span class="cmb">Derived Parameters</span>
T_pwm                   = 1/target.PWM_frequency;
Ts                      = 1/fCurrentControl;
Ts_speed                = 1/fSpeedControl;
Ts_motor                = Ts/2;

Ts_SerialOut = 0.1;                             <span class="cm">% Required only for UART</span>

pmsm.FluxPM   = (pmsm.Ke)/(sqrt(3)*2*pi*1000*pmsm.p/60);
pmsm.N_base   = mcb.getMotorBaseSpeed(pmsm,inverter);
pmsm.T_rated  = mcb.PMSMRatedTorque(pmsm);      <span class="cm">% Nm</span>
PU_System     = mcb.getPUSystemParameters(pmsm,inverter);
PI_params     = mcb.getPIControllerParameters(pmsm,inverter,PU_System,T_pwm,Ts,Ts_speed);

run_FOC_VF_control_Switch = 1; <span class="cm">% Use this to switch between FOC (1) and V/F Controller (0)</span></div>
<div class="a" style="left:324.2px;top:480.2px;width:175.5px;height:19.8px;border:1.9px solid #f72828"></div>

</body></html>
